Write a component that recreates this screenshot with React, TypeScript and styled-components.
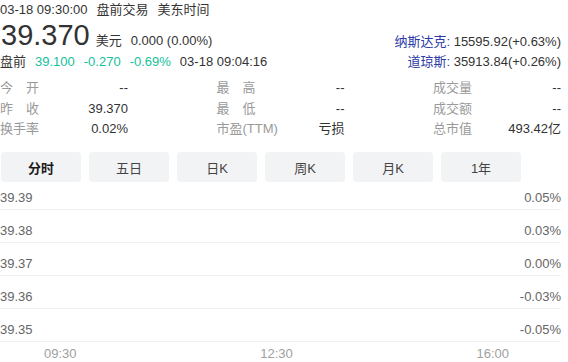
import React from "react";
import styled, { createGlobalStyle } from "styled-components";

const Global = createGlobalStyle`
  html, body { margin: 0; padding: 0; background: #fff; }
  body {
    font-family: "Liberation Sans", Arial, "Noto Sans CJK SC", sans-serif;
    font-size: 13px;
    color: #333;
  }
`;

const Page = styled.div`
  width: 561px;
  display: flex;
  flex-direction: column;
`;

const Header = styled.div`
  display: flex;
  justify-content: space-between;
  align-items: flex-end;
`;

const HeaderLeft = styled.div`
  display: flex;
  flex-direction: column;
`;

const Line = styled.div`
  display: flex;
  align-items: baseline;
  gap: 9px;
  height: 20px;
  line-height: 20px;
  white-space: nowrap;
`;

const PriceLine = styled.div`
  display: flex;
  align-items: baseline;
  height: 31.5px;
  line-height: 31px;
  white-space: nowrap;
`;

const BigPrice = styled.span`
  font-size: 29px;
  color: #333;
  margin-left: 1px;
`;

const Unit = styled.span`
  margin-left: 6px;
`;

const Change = styled.span`
  margin-left: 9px;
`;

const Teal = styled.span`
  color: #14bf9c;
`;

const HeaderRight = styled.div`
  display: flex;
  flex-direction: column;
  align-items: flex-end;
`;

const IndexLabel = styled.span`
  color: #2b3aa8;
`;

const Stats = styled.div`
  display: grid;
  grid-template-columns: repeat(3, 128px);
  justify-content: space-between;
  margin-top: 6.5px;
`;

const StatCell = styled.div`
  display: flex;
  justify-content: space-between;
  height: 20.5px;
  line-height: 20px;
  white-space: nowrap;
`;

const StatLabel = styled.span<{ $justify?: boolean }>`
  color: #9a9a9a;
  ${(p) => (p.$justify ? "width: 39px; text-align: justify; text-align-last: justify;" : "")}
`;

const StatValue = styled.span`
  color: #333;
`;

const Tabs = styled.div`
  display: flex;
  gap: 8px;
  margin-top: 12.5px;
  padding-left: 1px;
`;

const Tab = styled.div<{ $active?: boolean }>`
  width: 80px;
  height: 30px;
  border-radius: 4px;
  background: #f2f3f5;
  display: flex;
  align-items: center;
  justify-content: center;
  color: ${(p) => (p.$active ? "#1a1a1a" : "#444")};
  font-weight: ${(p) => (p.$active ? 700 : 400)};
`;

const Chart = styled.div`
  display: flex;
  flex-direction: column;
`;

const ChartRow = styled.div`
  box-sizing: border-box;
  height: 33px;
  display: flex;
  justify-content: space-between;
  align-items: flex-end;
  padding: 0 0 3px 0;
  border-bottom: 1px solid #f0f0f0;
  line-height: 16px;
  color: #666;
  &:first-child { height: 28px; }
`;

const TimeAxis = styled.div`
  display: flex;
  justify-content: space-between;
  padding: 4px 52px 0 44px;
  line-height: 16px;
  color: #a0a0a0;
`;

const stats: [string, string, boolean][][] = [
  [["今开", "--", true], ["最高", "--", true], ["成交量", "--", false]],
  [["昨收", "39.370", true], ["最低", "--", true], ["成交额", "--", false]],
  [["换手率", "0.02%", false], ["市盈(TTM)", "亏损", false], ["总市值", "493.42亿", false]],
];

const rows = [
  ["39.39", "0.05%"],
  ["39.38", "0.03%"],
  ["39.37", "0.00%"],
  ["39.36", "-0.03%"],
  ["39.35", "-0.05%"],
];

const tabs = ["分时", "五日", "日K", "周K", "月K", "1年"];

export default function App() {
  return (
    <Page>
      <Global />
      <Header>
        <HeaderLeft>
          <Line>
            <span>03-18 09:30:00</span>
            <span>盘前交易</span>
            <span>美东时间</span>
          </Line>
          <PriceLine>
            <BigPrice>39.370</BigPrice>
            <Unit>美元</Unit>
            <Change>0.000 (0.00%)</Change>
          </PriceLine>
          <Line>
            <span>盘前</span>
            <Teal>39.100</Teal>
            <Teal>-0.270</Teal>
            <Teal>-0.69%</Teal>
            <span>03-18 09:04:16</span>
          </Line>
        </HeaderLeft>
        <HeaderRight>
          <Line>
            <span>
              <IndexLabel>纳斯达克:</IndexLabel> 15595.92(+0.63%)
            </span>
          </Line>
          <Line>
            <span>
              <IndexLabel>道琼斯:</IndexLabel> 35913.84(+0.26%)
            </span>
          </Line>
        </HeaderRight>
      </Header>
      <Stats>
        {stats.flat().map(([l, v, j], i) => (
          <StatCell key={i}>
            <StatLabel $justify={j}>{l}</StatLabel>
            <StatValue>{v}</StatValue>
          </StatCell>
        ))}
      </Stats>
      <Tabs>
        {tabs.map((t, i) => (
          <Tab key={t} $active={i === 0}>
            {t}
          </Tab>
        ))}
      </Tabs>
      <Chart>
        {rows.map(([a, b]) => (
          <ChartRow key={a}>
            <span>{a}</span>
            <span>{b}</span>
          </ChartRow>
        ))}
      </Chart>
      <TimeAxis>
        <span>09:30</span>
        <span>12:30</span>
        <span>16:00</span>
      </TimeAxis>
    </Page>
  );
}
